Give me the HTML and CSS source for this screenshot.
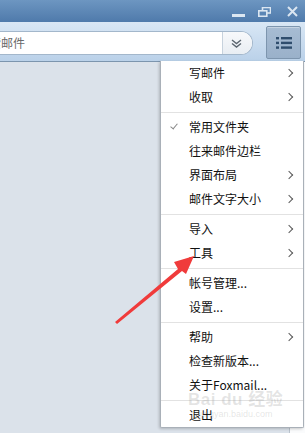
FILE: index.html
```html
<!DOCTYPE html>
<html>
<head>
<meta charset="utf-8">
<link rel="stylesheet" href="styles.css">
</head>
<body>
<div class="window">
  <div class="titlebar">
    <span class="ctl min"></span>
    <span class="ctl restore"><svg width="13" height="10" viewBox="0 0 13 10"><rect x="4.5" y="0.5" width="8" height="5.5" fill="none" stroke="#dbe6f1" stroke-width="1.6"/><rect x="0.8" y="3.8" width="8" height="5.5" fill="#5b86b5" stroke="#dbe6f1" stroke-width="1.6"/></svg></span>
    <span class="ctl close"><svg width="11" height="11" viewBox="0 0 11 11"><path d="M1 1L10 10M10 1L1 10" stroke="#dbe6f1" stroke-width="2"/></svg></span>
  </div>
  <div class="toolbar">
    <div class="search">
      <span class="search-text">搜索邮件</span>
      <span class="search-drop"><svg width="11" height="9" viewBox="0 0 11 9"><path d="M1 1L5.5 4.5L10 1M1 4.5L5.5 8L10 4.5" fill="none" stroke="#5c6670" stroke-width="1.4"/></svg></span>
    </div>
    <div class="menubtn"><svg width="16" height="12" viewBox="0 0 16 12"><rect x="0" y="0" width="3" height="2.4" fill="#2f4d6d"/><rect x="5" y="0" width="11" height="2.4" fill="#2f4d6d"/><rect x="0" y="4.7" width="3" height="2.4" fill="#2f4d6d"/><rect x="5" y="4.7" width="11" height="2.4" fill="#2f4d6d"/><rect x="0" y="9.4" width="3" height="2.4" fill="#2f4d6d"/><rect x="5" y="9.4" width="11" height="2.4" fill="#2f4d6d"/></svg></div>
  </div>
  <div class="content">
    <div class="main"></div>
    <div class="side"></div>
  </div>

  <div class="menu">
    <div class="item sub">写邮件</div>
    <div class="item sub">收取</div>
    <div class="sep"></div>
    <div class="item checked">常用文件夹</div>
    <div class="item">往来邮件边栏</div>
    <div class="item sub">界面布局</div>
    <div class="item sub">邮件文字大小</div>
    <div class="sep"></div>
    <div class="item sub">导入</div>
    <div class="item sub">工具</div>
    <div class="sep"></div>
    <div class="item">帐号管理...</div>
    <div class="item">设置...</div>
    <div class="sep"></div>
    <div class="item sub">帮助</div>
    <div class="item">检查新版本...</div>
    <div class="item">关于Foxmail...</div>
    <div class="sep"></div>
    <div class="item">退出</div>
  </div>

  <div class="watermark">
    <div class="wm-big">Bai du 经验</div>
    <div class="wm-small">jingyan.baidu.com</div>
  </div>

  <svg class="arrow" width="305" height="433" viewBox="0 0 305 433">
    <polygon points="115,322 178,269 174,262 194,256 186,274 182,271 117,324" fill="#f03b3b"/>
  </svg>
</div>
</body>
</html>
```

FILE: styles.css
```css
html, body {
  margin: 0;
  padding: 0;
}
body {
  width: 305px;
  height: 433px;
  overflow: hidden;
  font-family: "Noto Sans CJK SC", "Microsoft YaHei", sans-serif;
}
.window {
  position: relative;
  width: 305px;
  height: 433px;
  display: flex;
  flex-direction: column;
  background: #dbe2ea;
}
.titlebar {
  height: 22px;
  background: linear-gradient(#6d96c1, #4f7aab);
  display: flex;
  justify-content: flex-end;
  align-items: center;
  padding-right: 7px;
  flex-shrink: 0;
}
.ctl {
  display: flex;
  align-items: center;
  justify-content: center;
}
.min {
  width: 13px;
  height: 3px;
  background: #dbe6f1;
  margin-top: 8px;
  margin-right: 13px;
}
.restore {
  margin-right: 16px;
  margin-top: 2px;
}
.close {
  margin-top: 1px;
}
.toolbar {
  height: 39px;
  border-bottom: 1px solid #7c95ae;
  background: linear-gradient(#d9e7f5, #bad1e9);
  display: flex;
  align-items: center;
  flex-shrink: 0;
}
.search {
  margin-left: -12px;
  width: 264px;
  height: 22px;
  margin-top: 3px;
  background: #fff;
  border: 1px solid #a3b7cb;
  border-left: none;
  border-radius: 0 12px 12px 0;
  display: flex;
  align-items: center;
  justify-content: space-between;
  overflow: hidden;
}
.search-text {
  font-size: 12px;
  color: #6a6a6a;
  margin-left: -11px;
  line-height: 22px;
}
.search-drop {
  width: 27px;
  height: 22px;
  border-left: 1px solid #c7d2dd;
  background: linear-gradient(#f7f9fb, #e9eef3);
  display: flex;
  align-items: center;
  justify-content: center;
  padding-right: 2px;
}
.menubtn {
  margin-left: 13px;
  width: 33px;
  height: 31px;
  margin-top: 2px;
  border: 1px solid #7d95ae;
  border-radius: 2px;
  background: linear-gradient(#a7bcd3, #9ab1ca);
  display: flex;
  align-items: center;
  justify-content: center;
  box-shadow: inset 0 1px 0 rgba(255,255,255,0.35);
}
.content {
  flex: 1;
  display: flex;
}
.main {
  flex: 1;
}
.side {
  width: 15px;
  background: #fafbfc;
  border-left: 1px solid #b9c2cc;
}
.menu {
  position: absolute;
  left: 160px;
  top: 61px;
  width: 142px;
  background: #fff;
  border: 1px solid #a9b0b8;
  border-top: none;
  border-radius: 0 0 2px 2px;
  box-shadow: -1px 1px 3px rgba(0,0,0,0.2);
  padding: 0;
}
.item {
  position: relative;
  height: 24px;
  line-height: 24px;
  font-size: 12px;
  color: #111;
  padding-left: 28px;
}
.item.sub::after {
  content: "";
  position: absolute;
  right: 11px;
  top: 9px;
  width: 5px;
  height: 5px;
  border-top: 1.5px solid #5a5a5a;
  border-right: 1.5px solid #5a5a5a;
  transform: rotate(45deg);
}
.item.checked::before {
  content: "";
  position: absolute;
  left: 11px;
  top: 7px;
  width: 3px;
  height: 6px;
  border-right: 1.3px solid #888;
  border-bottom: 1.3px solid #888;
  transform: rotate(40deg);
}
.sep {
  height: 1px;
  background: #e2e2e2;
  margin: 3px 0 2px;
}
.watermark {
  position: absolute;
  left: 188px;
  top: 390px;
  pointer-events: none;
  color: rgba(160,160,160,0.28);
  font-family: "Liberation Sans", "Noto Sans CJK SC", sans-serif;
}
.wm-big {
  font-size: 17px;
  font-weight: bold;
  line-height: 19px;
  letter-spacing: 0.5px;
}
.wm-small {
  font-size: 9px;
  line-height: 10px;
  margin-left: 12px;
}
.arrow {
  position: absolute;
  left: 0;
  top: 0;
  pointer-events: none;
}
```
